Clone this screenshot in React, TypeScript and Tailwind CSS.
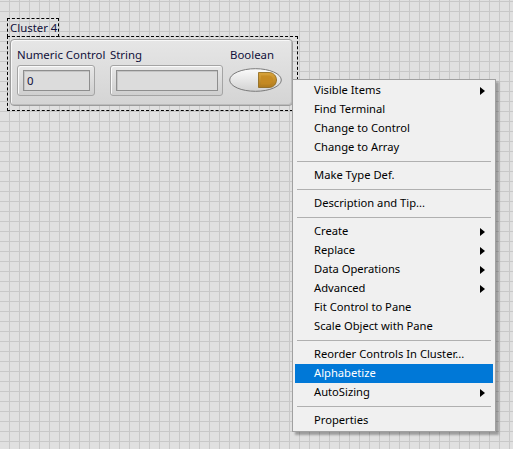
import React from "react";

type Item = { label?: string; sub?: boolean; sep?: boolean; active?: boolean };

const items: Item[] = [
  { label: "Visible Items", sub: true },
  { label: "Find Terminal" },
  { label: "Change to Control" },
  { label: "Change to Array" },
  { sep: true },
  { label: "Make Type Def." },
  { sep: true },
  { label: "Description and Tip..." },
  { sep: true },
  { label: "Create", sub: true },
  { label: "Replace", sub: true },
  { label: "Data Operations", sub: true },
  { label: "Advanced", sub: true },
  { label: "Fit Control to Pane" },
  { label: "Scale Object with Pane" },
  { sep: true },
  { label: "Reorder Controls In Cluster..." },
  { label: "Alphabetize", active: true },
  { label: "AutoSizing", sub: true },
  { sep: true },
  { label: "Properties" },
];

function Arrow({ white }: { white?: boolean }) {
  return (
    <svg width="5" height="8" viewBox="0 0 5 8" className="block">
      <path d="M0 0 L5 4 L0 8 Z" fill={white ? "#ffffff" : "#000000"} />
    </svg>
  );
}

function BoolSwitch() {
  return (
    <svg width="53" height="24" viewBox="0 0 53 24" className="block">
      <defs>
        <linearGradient id="ov" x1="0" y1="0" x2="0" y2="1">
          <stop offset="0" stopColor="#fbfbfb" />
          <stop offset="1" stopColor="#d2d2d2" />
        </linearGradient>
        <linearGradient id="gd" x1="0" y1="0" x2="0" y2="1">
          <stop offset="0" stopColor="#d9a43c" />
          <stop offset="1" stopColor="#b07a1c" />
        </linearGradient>
      </defs>
      <ellipse cx="26.5" cy="12" rx="25.8" ry="11.3" fill="url(#ov)" stroke="#7a7a7a" strokeWidth="1" />
      <path d="M29.5 4.5 H40 C45 4.5 47.5 8.5 47.5 12 C47.5 15.5 45 19.5 40 19.5 H29.5 Z" fill="url(#gd)" stroke="#8a6418" strokeWidth="0.8" />
      <path d="M32 7.5 H39.5 C42.5 7.5 44 10 44 12 C44 14 42.5 16.5 39.5 16.5 H32 Z" fill="#c58a22" opacity="0.8" />
    </svg>
  );
}

export default function App() {
  return (
    <div
      className="relative w-[513px] h-[449px] overflow-hidden bg-[#e0e0e0] bg-[linear-gradient(to_right,#c8c8c8_1px,transparent_1px),linear-gradient(to_bottom,#c8c8c8_1px,transparent_1px)] bg-[size:10px_10px] bg-[position:9px_1px]"
      style={{ fontFamily: '"Noto Sans", "Open Sans", sans-serif' }}
    >
      {/* Cluster label */}
      <div className="absolute left-[7px] top-[18px] w-[52px] h-[19px] border border-dashed border-black flex items-center pl-[2px] text-[11.4px] leading-none whitespace-nowrap text-[#10103a]">
        Cluster 4
      </div>

      {/* Cluster selection box */}
      <div className="absolute left-[7px] top-[36px] w-[291px] h-[75px] border border-dashed border-black p-[2px]">
        <div className="w-[283px] h-[67px] rounded-[4px] border border-[#9c9c9c] bg-[linear-gradient(to_bottom,#e6e6e6,#d4d4d4)] shadow-[inset_1px_1px_0_#f8f8f8,inset_-1px_-1px_0_#bcbcbc] flex pl-[6px] pt-[7px] text-[11.4px] leading-[16px] text-[#10103a]">
          {/* Numeric */}
          <div className="flex flex-col w-[78px]">
            <div className="whitespace-nowrap">Numeric Control</div>
            <div className="mt-[2px] w-[78px] h-[31px] rounded-[3px] border border-[#a4a4a4] bg-[linear-gradient(to_bottom,#e8e8e8,#cfcfcf)] shadow-[inset_1px_1px_0_#fafafa] pl-[5px] pt-[4px]">
              <div className="w-[67px] h-[21px] border border-[#8e8e8e] bg-[#dcdcdc] shadow-[inset_1px_1px_0_#c4c4c4] pl-[3px] flex items-center text-[11.4px] text-[#10103a]">
                0
              </div>
            </div>
          </div>
          {/* String */}
          <div className="flex flex-col w-[113px] ml-[15px]">
            <div className="whitespace-nowrap">String</div>
            <div className="mt-[2px] w-[113px] h-[31px] rounded-[3px] border border-[#a4a4a4] bg-[linear-gradient(to_bottom,#e8e8e8,#cfcfcf)] shadow-[inset_1px_1px_0_#fafafa] pl-[5px] pt-[4px]">
              <div className="w-[102px] h-[21px] border border-[#8e8e8e] bg-[#dcdcdc] shadow-[inset_1px_1px_0_#c4c4c4]" />
            </div>
          </div>
          {/* Boolean */}
          <div className="flex flex-col ml-[6px]">
            <div className="whitespace-nowrap pl-[1px]">Boolean</div>
            <div className="mt-[5px]">
              <BoolSwitch />
            </div>
          </div>
        </div>
      </div>

      {/* Context menu */}
      <div className="absolute left-[292px] top-[79px] w-[204px] border border-[#a0a0a0] bg-[#f0f0f0] px-[2px] py-[1px] shadow-[3px_3px_2px_rgba(0,0,0,0.3)] text-[11.2px] text-black">
        {items.map((it, i) =>
          it.sep ? (
            <div key={i} className="h-[9px] flex items-center px-[2px]">
              <div className="w-full h-px bg-[#b0b0b0]" />
            </div>
          ) : (
            <div
              key={i}
              className={
                "h-[19px] flex items-center justify-between pl-[19px] pr-[8px] whitespace-nowrap " +
                (it.active ? "bg-[#0078d7] text-white" : "")
              }
            >
              <span>{it.label}</span>
              {it.sub ? <Arrow white={it.active} /> : null}
            </div>
          )
        )}
      </div>
    </div>
  );
}
